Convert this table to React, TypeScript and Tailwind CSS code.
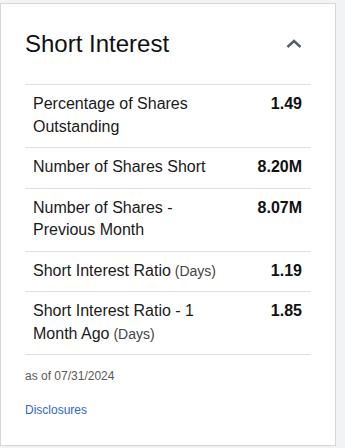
const rows = [
  { label: 'Percentage of Shares Outstanding', value: '1.49' },
  { label: 'Number of Shares Short', value: '8.20M' },
  { label: 'Number of Shares - Previous Month', value: '8.07M' },
  { label: 'Short Interest Ratio', unit: '(Days)', value: '1.19' },
  { label: 'Short Interest Ratio - 1 Month Ago', unit: '(Days)', value: '1.85' },
];

export default function App() {
  return (
    <div className="w-[345px] h-[448px] bg-[#f2f3f5] pt-[3px] font-['Liberation_Sans',Arial,sans-serif]">
      <div className="w-[336px] h-[443px] bg-white border border-[#d3d7dd] px-6 pt-6">
        <div className="flex items-center justify-between mb-6">
          <h2 className="text-[24px] leading-8 text-[#111]">Short Interest</h2>
          <svg width="16" height="10" viewBox="0 0 16 10" className="mr-[9px]">
            <path d="M1.5 8 L8 2 L14.5 8" fill="none" stroke="#555e6b" strokeWidth="2.4" />
          </svg>
        </div>

        <div className="border-b border-[#dcdfe3]">
          {rows.map((r) => (
            <div key={r.label} className="flex justify-between border-t border-[#dcdfe3] pl-2 pr-[9px] pt-2 pb-[9px]">
              <div className="w-[200px] text-[16px] leading-[22.5px] text-[#1a1a1a]">
                {r.label}
                {r.unit && <span className="text-[14px] text-[#444]"> {r.unit}</span>}
              </div>
              <div className="text-[16px] leading-[22.5px] font-bold text-[#111]">{r.value}</div>
            </div>
          ))}
        </div>

        <p className="mt-[13px] text-[12px] leading-4 text-[#5a5a5a]">as of 07/31/2024</p>
        <a href="#" className="block mt-[18px] text-[12px] leading-4 text-[#3366cc]">Disclosures</a>
      </div>
    </div>
  );
}
